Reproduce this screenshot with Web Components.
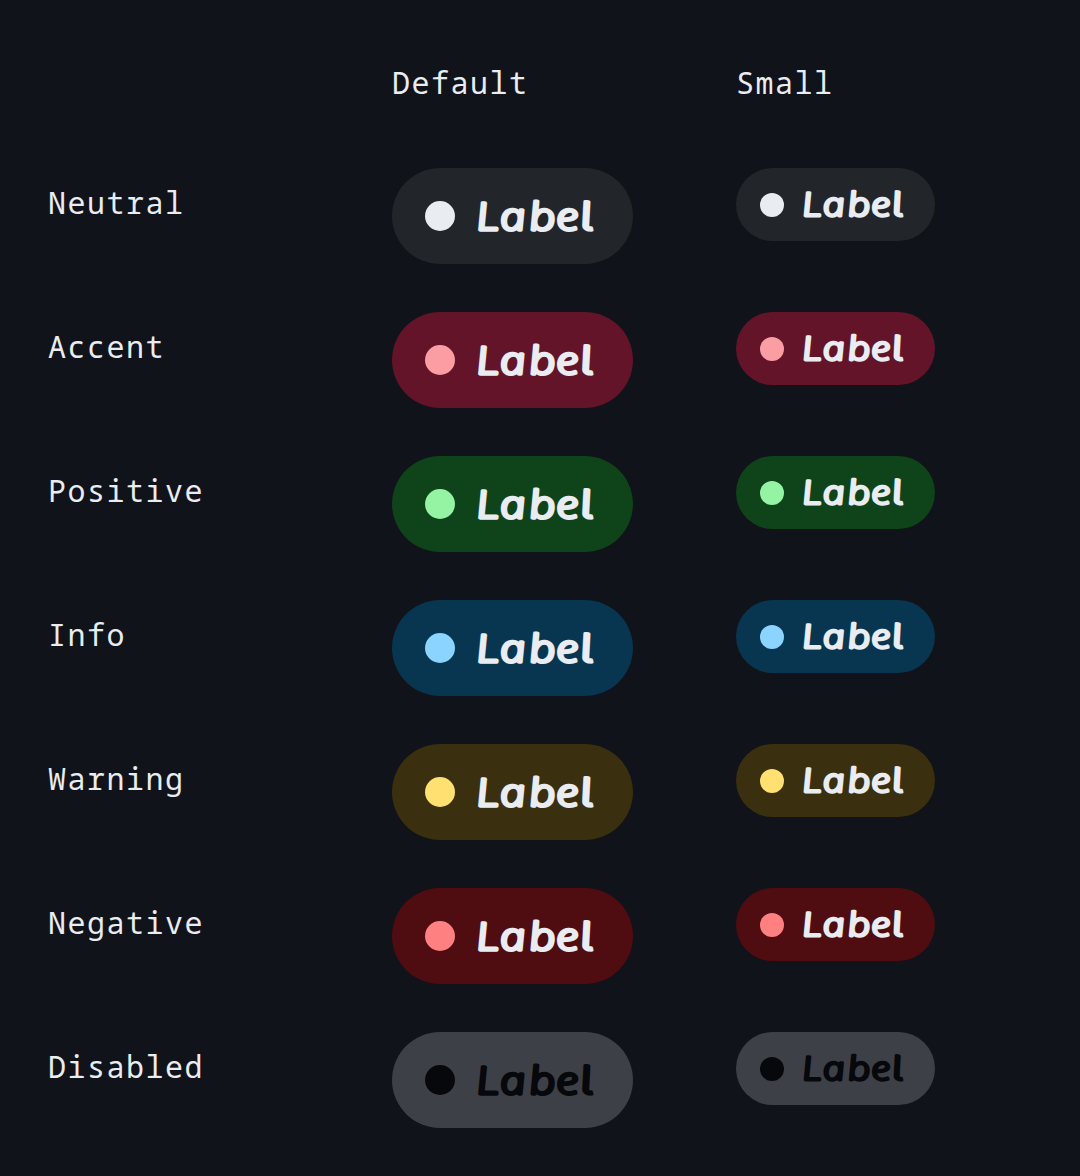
<!DOCTYPE html>
<html lang="en">
<head>
<meta charset="utf-8">
<title>Status badges</title>
<style>
html,body{margin:0;background:#101319}
</style>
</head>
<body>
<badge-sheet></badge-sheet>
<script>
customElements.define('status-badge', class extends HTMLElement {
  connectedCallback() {
    const label = this.getAttribute('label');
    this.attachShadow({mode:'open'}).innerHTML = `
<style>
:host{display:inline-flex;align-items:center;box-sizing:border-box;width:241px;height:96px;padding-left:33px;gap:20px;border-radius:48px;background:var(--fill);color:var(--ink,#e9ecf1);vertical-align:top}
i{flex:none;width:30px;height:30px;border-radius:50%;background:var(--dot)}
svg{display:block;flex:none;width:124px;height:44px;overflow:visible}
text{letter-spacing:0;font:italic 300 38px "Open Sans","Noto Sans",sans-serif;fill:currentColor;stroke:currentColor;stroke-width:3.3px;stroke-linejoin:round;stroke-linecap:round}
.tail{font:300 38.5px Inter,sans-serif;font-feature-settings:"cv05" 1,"ss02" 1;stroke-width:3.2px}
:host([small]){width:199px;height:73px;padding-left:24px;gap:17px;border-radius:36.5px}
:host([small]) i{width:24px;height:24px}
:host([small]) svg{width:107px;height:38px;margin-top:-1px}
</style>
<i></i><svg viewBox="0 0 124 44"><text transform="translate(0 36) skewX(9) scale(1.2 1)" x="2.5 22.4 46.7 69 87.8" y="0 0 0 0 -1.6" rotate="0 0 0 0 10">${label.slice(0,-1)}<tspan class="tail">${label.slice(-1)}</tspan></text></svg>`;
  }
});
customElements.define('badge-row', class extends HTMLElement {
  connectedCallback() {
    this.attachShadow({mode:'open'}).innerHTML = `
<style>
:host{display:grid;grid-template-columns:344px 344px 1fr;height:144px;align-items:start}
span{height:72px;line-height:70px}
</style>
<span>${this.getAttribute('name')}</span><slot></slot>`;
  }
});
customElements.define('badge-sheet', class extends HTMLElement {
  connectedCallback() {
    const rows = [
      ['Neutral','#222529','#e9ecf1'],['Accent','#641428','#fa9ea4'],
      ['Positive','#0f431a','#95f3a4'],['Info','#083650','#8ad4ff'],
      ['Warning','#3a2f0f','#ffe070'],['Negative','#500d11','#ff8080'],
      ['Disabled','#3e4047','#06080c','#06080c']];
    this.attachShadow({mode:'open'}).innerHTML = `
<style>
:host{display:block;box-sizing:border-box;width:1080px;height:1176px;padding:48px 48px 0;overflow:hidden;background:#101319;color:#e9ecf1;font:30px "Noto Sans Mono","DejaVu Sans Mono",monospace;letter-spacing:1.5px}
header{display:grid;grid-template-columns:344px 344px 1fr;height:120px;line-height:70px}
</style>
<header><span></span><span>Default</span><span>Small</span></header>
${rows.map(([n,f,d,k]) => {
  const s = `--fill:${f};--dot:${d}${k ? ';--ink:'+k : ''}`;
  return `<badge-row name="${n}"><status-badge label="Label" style="${s}"></status-badge><status-badge small label="Label" style="${s}"></status-badge></badge-row>`;
}).join('')}`;
  }
});
</script>
</body>
</html>
